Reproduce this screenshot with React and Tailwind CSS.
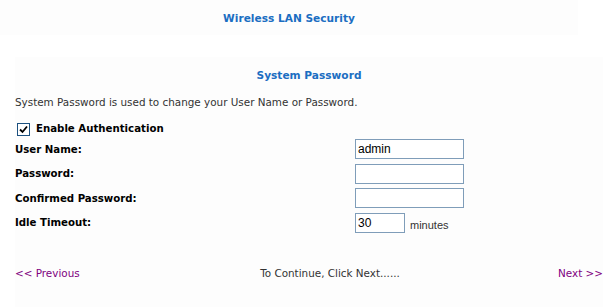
export default function App() {
  const rows = [
    { label: 'User Name:', value: 'admin' },
    { label: 'Password:', value: '' },
    { label: 'Confirmed Password:', value: '' },
  ]

  return (
    <div className="w-[615px] h-[307px] bg-white font-['DejaVu_Sans',Verdana,sans-serif] text-[10.4px] text-[#333]">
      {/* heading */}
      <div className="w-[578px] h-[35px] bg-[#fdfdfd] flex items-center justify-center">
        <span className="font-bold text-[#1b6ec2] text-[10.6px] pt-[3px]">Wireless LAN Security</span>
      </div>

      <div className="ml-[15px] mt-[22px] w-[588px] h-[250px] bg-[#fdfdfd]">
        <div className="h-[36px] flex items-center justify-center pt-[1px]">
          <span className="font-bold text-[#1b6ec2] text-[10.6px]">System Password</span>
        </div>
        <p className="h-[18px] leading-[18px]">
          System Password is used to change your User Name or Password.
        </p>

        <div className="mt-[8px] h-[20px] flex items-center">
          <span className="ml-[2px] w-[13px] h-[13px] border border-[#1c5180] bg-white flex items-center justify-center">
            <svg width="9" height="9" viewBox="0 0 9 9">
              <path d="M1 4.5 L3.5 7 L8 1.5" fill="none" stroke="#000" strokeWidth="1.8" />
            </svg>
          </span>
          <span className="ml-[6px] font-bold text-black text-[10.2px]">Enable Authentication</span>
        </div>

        <div className="-mt-[2px] flex flex-col">
          {rows.map((r) => (
            <div key={r.label} className="h-[24.6px] flex items-center">
              <span className="w-[340px] font-bold text-black text-[10.2px]">{r.label}</span>
              <div className="w-[109px] h-[20px] border border-[#7f9db9] bg-white px-[2px] flex items-center font-['Liberation_Sans',Arial,sans-serif] text-[12px] text-black">
                {r.value}
              </div>
            </div>
          ))}
          <div className="h-[24.6px] flex items-center">
            <span className="w-[340px] font-bold text-black text-[10.2px]">Idle Timeout:</span>
            <div className="w-[50px] h-[20px] border border-[#7f9db9] bg-white px-[2px] flex items-center font-['Liberation_Sans',Arial,sans-serif] text-[12px] text-black">
              30
            </div>
            <span className="ml-[5px] pt-[4px] font-['Liberation_Sans',Arial,sans-serif] text-[11px] text-[#333]">minutes</span>
          </div>
        </div>

        <div className="mt-[28px] h-[20px] grid grid-cols-[1fr_auto_1fr] items-center">
          <span className="text-[#800080]">&lt;&lt; Previous</span>
          <span className="ml-[42px]">To Continue, Click Next......</span>
          <span className="text-[#800080] text-right">Next &gt;&gt;</span>
        </div>
      </div>
    </div>
  )
}
